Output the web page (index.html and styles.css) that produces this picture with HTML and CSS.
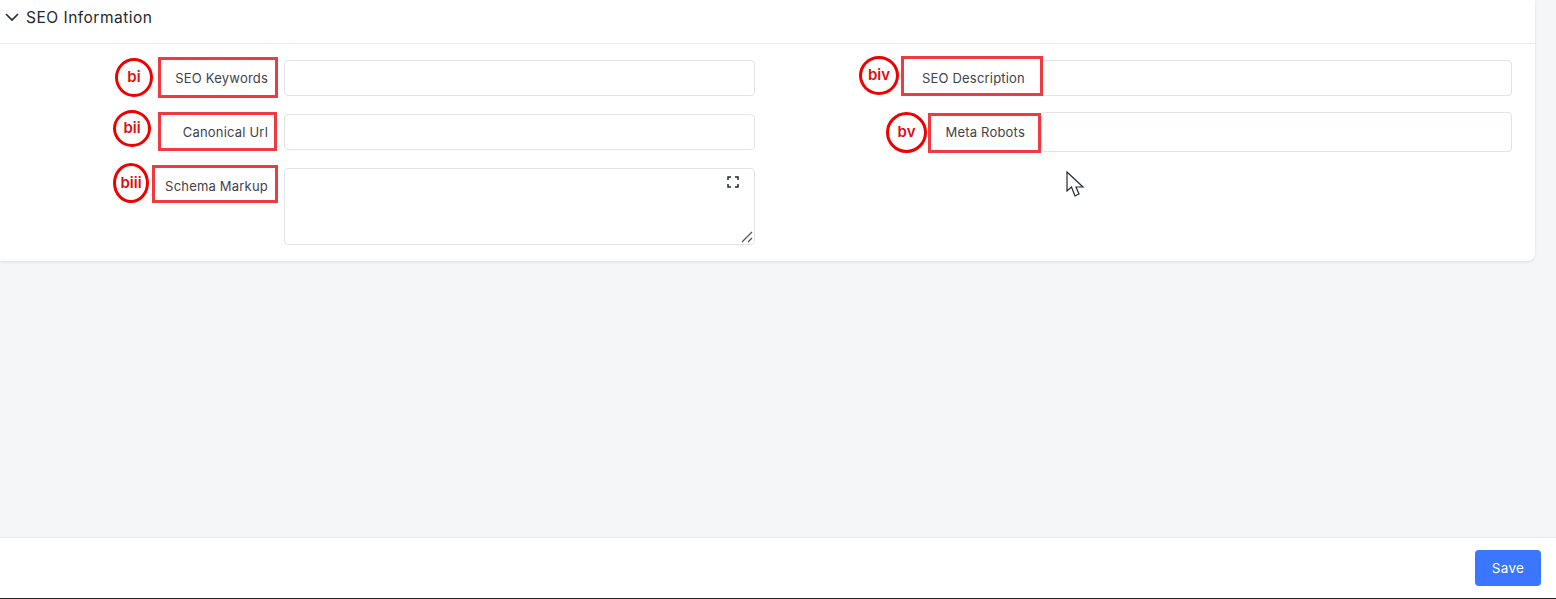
FILE: index.html
```html
<!DOCTYPE html>
<html>
<head>
    <title>SEO Information</title>
    <link rel="stylesheet" href="styles.css">
</head>
<body>
    <div class="main">
        <div class="card">
            <div class="card-head">
                <svg class="chevron" width="14" height="14" viewBox="0 0 14 14"><path d="M1 4l6 6 6-6" fill="none" stroke="#1f2933" stroke-width="1.6"/></svg>
                <span>SEO Information</span>
            </div>
            <div class="form">
                <div class="col">
                    <div class="field">
                        <label>SEO Keywords</label>
                        <input class="input">
                        <span class="mark box-bi"></span>
                        <span class="circle circle-bi">bi</span>
                    </div>
                    <div class="field">
                        <label>Canonical Url</label>
                        <input class="input">
                        <span class="mark box-bii"></span>
                        <span class="circle circle-bii">bii</span>
                    </div>
                    <div class="field">
                        <label>Schema Markup</label>
                        <div class="textarea">
                            <svg class="expand" width="12" height="12" viewBox="0 0 12 12"><path d="M1 4V1h3M8 1h3v3M11 8v3H8M4 11H1V8" fill="none" stroke="#1f2933" stroke-width="1.5"/></svg>
                            <svg class="grip" width="12" height="12" viewBox="0 0 12 12"><path d="M1 11L11 1M7 11l4-4" fill="none" stroke="#555" stroke-width="1.2"/></svg>
                        </div>
                        <span class="mark box-biii"></span>
                        <span class="circle circle-biii">biii</span>
                    </div>
                </div>
                <div class="col col-right">
                    <div class="field">
                        <label>SEO Description</label>
                        <input class="input">
                        <span class="mark box-biv"></span>
                        <span class="circle circle-biv">biv</span>
                    </div>
                    <div class="field field-tall">
                        <label>Meta Robots</label>
                        <input class="input">
                        <span class="mark box-bv"></span>
                        <span class="circle circle-bv">bv</span>
                    </div>
                </div>
            </div>
        </div>
        <svg class="cursor" width="20" height="28" viewBox="0 0 20 28"><path d="M1 1v19l4.500-4 3.500 9 4-2-3-7h7z" fill="#fff" stroke="#1f2933" stroke-width="1.2"/></svg>
    </div>
    <div class="footer">
        <button class="save">Save</button>
    </div>
    <div class="edge"></div>
</body>
</html>
```

FILE: styles.css
```css
* {
    box-sizing: border-box;
}

body {
    margin: 0;
    height: 599px;
    overflow: hidden;
    display: flex;
    flex-direction: column;
    background: #f5f6f8;
    font-family: "Inter", "Liberation Sans", sans-serif;
    color: #3f4349;
}

.main {
    position: relative;
    flex: 1;
}

.card {
    width: 1535px;
    height: 261px;
    background: #fff;
    border-radius: 0 0 8px 0;
    box-shadow: 0 1px 3px rgba(40, 50, 70, 0.12);
}

.card-head {
    height: 44px;
    padding: 0 0 9px 5px;
    display: flex;
    align-items: center;
    gap: 7px;
    font-size: 15.5px;
    letter-spacing: 0.5px;
    color: #25292e;
    border-bottom: 1px solid #ebedf0;
}

.form {
    display: flex;
    padding-top: 16px;
}

.col {
    width: 755px;
    display: flex;
    flex-direction: column;
    gap: 18px;
}

.col-right {
    width: 757px;
    gap: 16px;
}

.field {
    position: relative;
    display: flex;
    gap: 16px;
}

.field label {
    width: 268px;
    padding-top: 10px;
    font-size: 13px;
    letter-spacing: 0.2px;
    text-align: right;
}

.field-tall label {
    padding-top: 12px;
}

.input {
    flex: 1;
    height: 36px;
    border: 1px solid #e1e3ea;
    border-radius: 4px;
    background: #fff;
}

.field-tall .input {
    height: 40px;
}

.textarea {
    position: relative;
    flex: 1;
    height: 77px;
    border: 1px solid #e1e3ea;
    border-radius: 4px;
}

.expand {
    position: absolute;
    top: 7px;
    right: 15px;
}

.grip {
    position: absolute;
    right: 1px;
    bottom: 1px;
}

/* annotations drawn on top of the screenshot */
.mark {
    position: absolute;
    border: 3px solid #ef3b3f;
}

.circle {
    position: absolute;
    display: flex;
    align-items: center;
    justify-content: center;
    padding-bottom: 2px;
    border: 3px solid #f00000;
    border-radius: 50%;
    color: #e00b0b;
    font-size: 15px;
    font-weight: 600;
    background: #fff;
}

.box-bi { left: 158px; top: -3px; width: 120px; height: 41px; }
.box-bii { left: 158px; top: -2px; width: 119px; height: 39px; }
.box-biii { left: 152px; top: -3px; width: 126px; height: 38px; }
.box-biv { left: 146px; top: -4px; width: 142px; height: 40px; }
.box-bv { left: 173px; top: 1px; width: 113px; height: 40px; }

.circle-bi { left: 115px; top: -2px; width: 38px; height: 39px; }
.circle-bii { left: 113px; top: -4px; width: 38px; height: 37px; }
.circle-biii { left: 113px; top: -5px; width: 36px; height: 40px; }
.circle-biv { left: 104px; top: -4px; width: 40px; height: 39px; }
.circle-bv { left: 131px; top: 0; width: 41px; height: 41px; }

.col-right .field label {
    width: 270px;
}

.cursor {
    position: absolute;
    left: 1066px;
    top: 171px;
}

.footer {
    height: 61px;
    flex: none;
    display: flex;
    justify-content: flex-end;
    align-items: flex-start;
    padding: 12px 15px 0 0;
    background: #fff;
    border-top: 1px solid #e9ebef;
}

.save {
    width: 66px;
    height: 36px;
    border: none;
    border-radius: 4px;
    background: #3a76ff;
    color: #fff;
    font-family: inherit;
    font-size: 13.5px;
    letter-spacing: 0.3px;
}

.edge {
    height: 1px;
    flex: none;
    background: #222;
}
```
